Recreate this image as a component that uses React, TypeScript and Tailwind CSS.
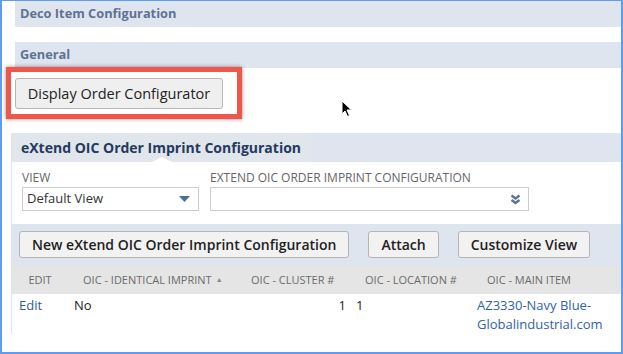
// Deco item record page — subtab with sublist, annotated with a red highlight box.
import React from "react";

const FONT = { fontFamily: '"Open Sans", "Liberation Sans", sans-serif' };

const COLUMNS = [
  { label: "EDIT", w: "w-[56px]", head: "justify-center", sort: false },
  { label: "OIC - IDENTICAL IMPRINT", w: "w-[168px]", head: "pl-[15px]", sort: true },
  { label: "OIC - CLUSTER #", w: "w-[113px]", head: "pl-[15px]", sort: false },
  { label: "OIC - LOCATION #", w: "w-[122px]", head: "pl-[16px]", sort: false },
  { label: "OIC - MAIN ITEM", w: "flex-1", head: "pl-[16px]", sort: false },
];

function SectionBand({ title }: { title: string }) {
  return (
    <div className="ml-[13px] flex h-[26px] items-center bg-[#dfe5ef] pl-[5px] text-[12.8px] font-bold text-[#5d7294]">
      {title}
    </div>
  );
}

function BarButton({ children }: { children: React.ReactNode }) {
  return (
    <button className="h-[27px] rounded-[3px] border border-[#b4b4b4] bg-[#f2f2f2] px-[12px] text-[14px] font-semibold leading-none text-[#222]">
      {children}
    </button>
  );
}

function Cursor() {
  return (
    <svg width="12" height="18" viewBox="0 0 12 18" className="absolute left-[339px] top-[99px]">
      <path d="M1 1 L1 14 L4 11 L6.5 16.5 L8.5 15.5 L6 10 L10.5 10 Z" fill="#000" stroke="#fff" strokeWidth="1" />
    </svg>
  );
}

export default function App() {
  return (
    <div
      style={FONT}
      className="relative h-[354px] w-[623px] overflow-hidden border-x-2 border-b-2 border-t border-[#5e9cf4] bg-white"
    >
      <SectionBand title="Deco Item Configuration" />
      <div className="mt-[15px]">
        <SectionBand title="General" />
      </div>

      <div className="ml-[13px] mt-[10px]">
        <button className="h-[31px] w-[208px] rounded-[3px] border border-[#b7b7b7] bg-[#efefef] text-[14.5px] text-[#222]">
          Display Order Configurator
        </button>
      </div>

      {/* subtab */}
      <div className="ml-[9px] mt-[24px] flex h-[29px] bg-[#dfe5ef]">
        <div className="relative flex h-full w-[302px] items-center bg-[#e1e5ec] pl-[10px] text-[14px] font-bold text-[#243a5e]">
          eXtend OIC Order Imprint Configuration
          <span className="absolute bottom-0 left-[141px] h-0 w-0 border-x-[10px] border-b-[5px] border-x-transparent border-b-white" />
        </div>
      </div>

      <div className="ml-[9px] border-l border-[#dfe5ef]">
        <div className="flex gap-[11px] pb-[13px] pl-[10px] pt-[8px]">
          <div className="flex flex-col">
            <span className="text-[12px] leading-[16px] text-[#666]">VIEW</span>
            <div className="mt-[1px] flex h-[24px] w-[177px] items-center justify-between border border-[#cccccc] pl-[4px] pr-[8px]">
              <span className="text-[13px] text-[#333]">Default View</span>
              <svg width="11" height="6" viewBox="0 0 11 6">
                <path d="M0 0 H11 L5.5 6 Z" fill="#4e6e99" />
              </svg>
            </div>
          </div>
          <div className="flex flex-col">
            <span className="text-[12px] leading-[16px] text-[#666]">EXTEND OIC ORDER IMPRINT CONFIGURATION</span>
            <div className="mt-[1px] flex h-[24px] w-[319px] items-center justify-end border border-[#cccccc] pr-[7px]">
              <svg width="11" height="11" viewBox="0 0 11 11">
                <path d="M1.5 1.5 L5.5 4.5 L9.5 1.5" fill="none" stroke="#5a7399" strokeWidth="2.4" />
                <path d="M1.5 6 L5.5 9 L9.5 6" fill="none" stroke="#5a7399" strokeWidth="2.4" />
              </svg>
            </div>
          </div>
        </div>

        <div className="flex gap-[19px] bg-[#dfe5ef] pb-[8px] pl-[7px] pt-[7px]">
          <BarButton>New eXtend OIC Order Imprint Configuration</BarButton>
          <BarButton>Attach</BarButton>
          <BarButton>Customize View</BarButton>
        </div>

        <div className="flex h-[28px] bg-[#e5e5e5] text-[11px] text-[#6b6b6b]">
          {COLUMNS.map((c) => (
            <div key={c.label} className={`${c.w} ${c.head} flex items-center`}>
              {c.label}
              {c.sort && <span className="ml-[4px] text-[7px] text-[#888]">▲</span>}
            </div>
          ))}
        </div>

        <div className="flex pt-[2px] text-[13px] leading-[19px] text-[#222]">
          <div className="w-[56px] pl-[7px] text-[#2b5ca6]">Edit</div>
          <div className="w-[168px] pl-[6px]">No</div>
          <div className="w-[113px] pr-[3px] text-right">1</div>
          <div className="w-[122px] pl-[7px]">1</div>
          <div className="flex-1 pl-[6px] text-[#2f62a8]">
            AZ3330-Navy Blue-
            <br />
            Globalindustrial.com
          </div>
        </div>
      </div>

      {/* red annotation box */}
      <div className="absolute left-[4px] top-[66px] h-[52px] w-[236px] border-[5px] border-[#f0564a] shadow-[0_0_4px_rgba(0,0,0,0.45)]" />
      <Cursor />
    </div>
  );
}
